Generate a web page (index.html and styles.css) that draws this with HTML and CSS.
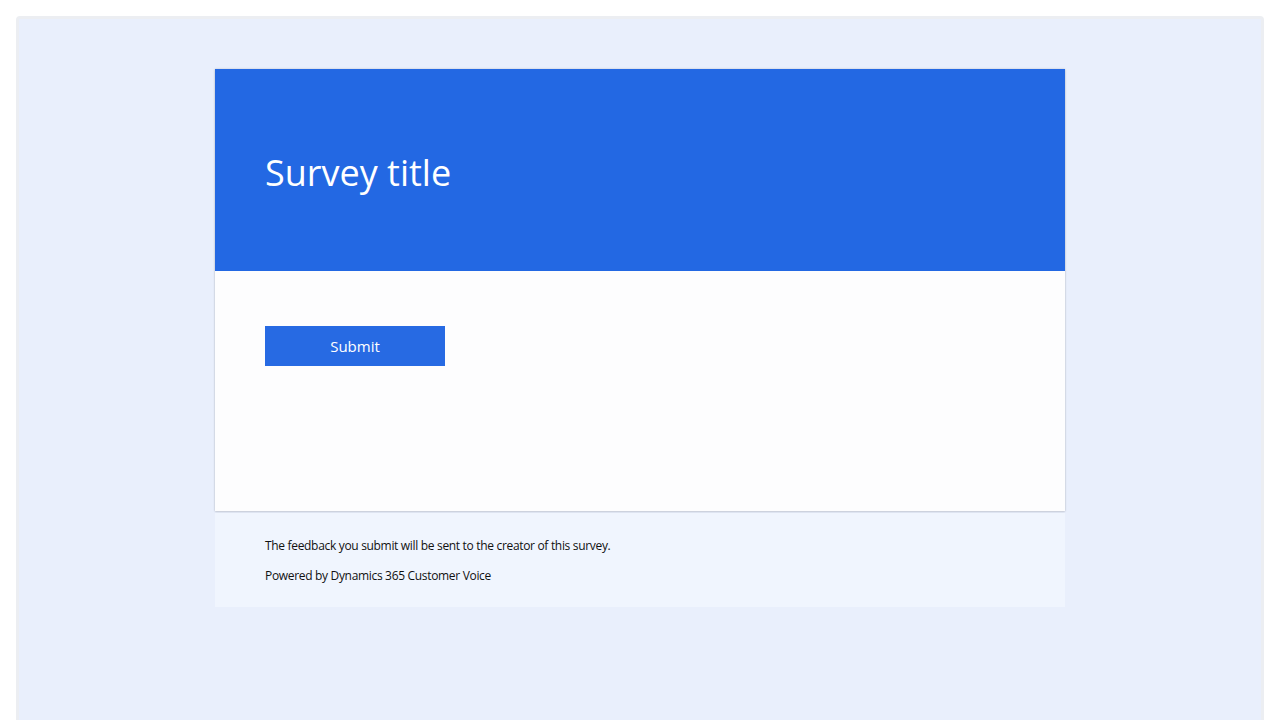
FILE: index.html
```html
<!DOCTYPE html>
<html lang="en">
<head>
<meta charset="utf-8">
<title>Survey</title>
<link rel="stylesheet" href="styles.css">
</head>
<body>
<div class="frame">
  <main class="survey">
    <section class="card">
      <header class="card-header">
        <h1 class="title">Survey title</h1>
      </header>
      <div class="card-body">
        <button class="submit" type="button">Submit</button>
      </div>
    </section>
    <footer class="survey-footer">
      <p class="note">The feedback you submit will be sent to the creator of this survey.</p>
      <p class="note">Powered by Dynamics 365 Customer Voice</p>
    </footer>
  </main>
</div>
</body>
</html>
```

FILE: styles.css
```css
html, body {
  margin: 0;
  padding: 0;
  background: #ffffff;
  font-family: "Open Sans", "Noto Sans", "Liberation Sans", sans-serif;
}

.frame {
  margin: 16px 16px 0;
  height: 704px;
  box-sizing: border-box;
  border: 3px solid #eceef2;
  border-bottom: none;
  border-radius: 4px 4px 0 0;
  background: #e9effc;
  padding-top: 50px;
  display: flex;
  justify-content: center;
}

.survey {
  width: 850px;
  display: flex;
  flex-direction: column;
}

.card {
  background: #fdfdfe;
  box-shadow: 0 0 2px rgba(0, 0, 0, 0.18), 0 1px 2px rgba(0, 0, 0, 0.1);
}

.card-header {
  background: #2368e3;
  height: 202px;
  box-sizing: border-box;
  padding: 6px 50px 0;
  display: flex;
  align-items: center;
}

.title {
  margin: 0;
  color: #ffffff;
  font-weight: 400;
  font-size: 36px;
  letter-spacing: 0;
  line-height: 1.2;
}

.card-body {
  height: 240px;
  box-sizing: border-box;
  padding: 55px 50px 0;
}

.submit {
  width: 180px;
  height: 40px;
  border: none;
  background: #276ae3;
  color: #ffffff;
  font-family: inherit;
  font-size: 15px;
  cursor: pointer;
}

.survey-footer {
  margin-top: 2px;
  background: #f0f5fe;
  padding: 18px 50px 16px;
}

.note {
  margin: 0;
  font-size: 12px;
  line-height: 30px;
  color: #111111;
  letter-spacing: -0.32px;
}
```
